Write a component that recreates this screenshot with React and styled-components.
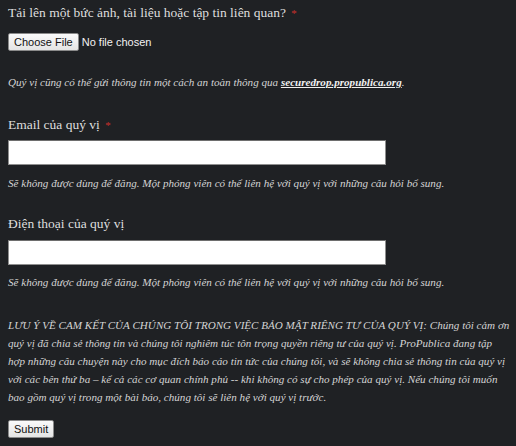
import styled, { createGlobalStyle } from "styled-components";

const GlobalStyle = createGlobalStyle`
  html, body {
    margin: 0;
    padding: 0;
    background: #1f2124;
  }
`;

export default function App() {
  return (
    <>
      <GlobalStyle />
      <Form onSubmit={(e) => e.preventDefault()}>
        <Label $top={4}>
          Tải lên một bức ảnh, tài liệu hoặc tập tin liên quan? <Req>*</Req>
        </Label>
        <FileRow>
          <NativeButton type="button">Choose File</NativeButton>
          <FileText>No file chosen</FileText>
        </FileRow>
        <Note $top={22}>
          Quý vị cũng có thể gửi thông tin một cách an toàn thông qua{" "}
          <Link href="#">securedrop.propublica.org</Link>.
        </Note>

        <Label $top={25}>
          Email của quý vị <Req>*</Req>
        </Label>
        <TextInput type="email" $top={6} />
        <Note $top={9}>
          Sẽ không được dùng để đăng. Một phóng viên có thể liên hệ với quý vị
          với những câu hỏi bổ sung.
        </Note>

        <Label $top={23}>Điện thoại của quý vị</Label>
        <TextInput type="tel" $top={7} />
        <Note $top={8}>
          Sẽ không được dùng để đăng. Một phóng viên có thể liên hệ với quý vị
          với những câu hỏi bổ sung.
        </Note>

        <Note $top={25}>
          LƯU Ý VỀ CAM KẾT CỦA CHÚNG TÔI TRONG VIỆC BẢO MẬT RIÊNG TƯ CỦA QUÝ
          VỊ: Chúng tôi cảm ơn quý vị đã chia sẻ thông tin và chúng tôi nghiêm
          túc tôn trọng quyền riêng tư của quý vị. ProPublica đang tập hợp những
          câu chuyện này cho mục đích báo cáo tin tức của chúng tôi, và sẽ không
          chia sẻ thông tin của quý vị với các bên thứ ba – kể cả các cơ quan
          chính phủ -- khi không có sự cho phép của quý vị. Nếu chúng tôi muốn
          bao gồm quý vị trong một bài báo, chúng tôi sẽ liên hệ với quý vị
          trước.
        </Note>

        <SubmitRow>
          <NativeButton type="submit">Submit</NativeButton>
        </SubmitRow>
      </Form>
    </>
  );
}

const Form = styled.form`
  display: flex;
  flex-direction: column;
  align-items: flex-start;
  padding: 0 8px;
  width: 502px;
  color: #d9d9d9;
  font-family: "Liberation Serif", "DejaVu Serif", serif;
`;

const Label = styled.label`
  margin-top: ${(p) => p.$top}px;
  font-size: 13.5px;
  line-height: 18px;
  color: #dedede;
`;

const Req = styled.span`
  color: #c9302c;
  font-size: 11px;
  vertical-align: top;
  margin-left: 2px;
`;

const FileRow = styled.div`
  display: flex;
  align-items: center;
  gap: 3px;
  margin-top: 11px;
  height: 18px;
`;

const NativeButton = styled.button`
  height: 18px;
  padding: 0 5px;
  font-family: "Liberation Sans", Arial, sans-serif;
  font-size: 11px;
  color: #111;
  background: linear-gradient(#fafafa, #e4e4e4);
  border: 1px solid #8a8a8a;
  border-radius: 2px;
`;

const FileText = styled.span`
  font-family: "Liberation Sans", Arial, sans-serif;
  font-size: 11px;
  color: #f2f2f2;
`;

const Note = styled.p`
  margin: ${(p) => p.$top}px 0 0;
  font-style: italic;
  font-size: 11.1px;
  line-height: 18px;
  color: #d4d4d4;
`;

const Link = styled.a`
  color: #f0f0f0;
  font-weight: bold;
  text-decoration: underline;
`;

const TextInput = styled.input`
  margin-top: ${(p) => p.$top}px;
  box-sizing: border-box;
  width: 378px;
  height: 25px;
  background: #fff;
  border: 1px solid #8f8f8f;
  border-top-color: #6e6e6e;
  padding: 0 4px;
`;

const SubmitRow = styled.div`
  margin-top: 13px;
`;
